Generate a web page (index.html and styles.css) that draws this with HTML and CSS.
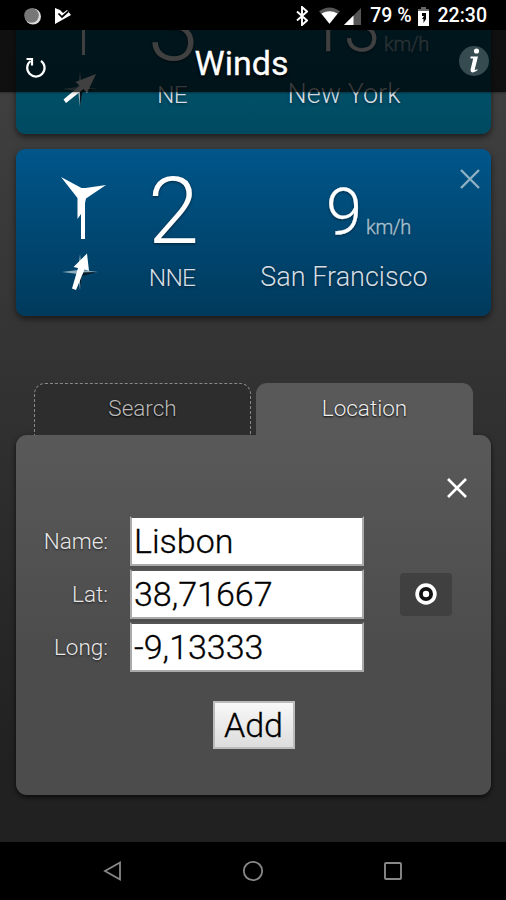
FILE: index.html
```html
<!DOCTYPE html>
<html lang="en">
<head>
<meta charset="utf-8">
<title>Winds</title>
<link rel="stylesheet" href="styles.css">
</head>
<body>
<div class="phone">
  <div class="status">
    <svg class="status-left" width="60" height="24" viewBox="0 0 60 24">
      <circle cx="14" cy="12.500" r="8" fill="#ddd"/><circle cx="12.500" cy="11.500" r="7.300" fill="#777"/>
      <path d="M36 4l5 2 3 3 4-3 4 5-16 9z" fill="#fff"/><path d="M39.500 9.500l3.500 3.500 6-5.500" fill="none" stroke="#000" stroke-width="1.700"/>
    </svg>
    <div class="status-right">
      <svg width="12" height="20" viewBox="0 0 12 20"><path d="M1 5.500l10 9-5 4.500V1l5 4.500-10 9" fill="none" stroke="#fff" stroke-width="1.900"/></svg>
      <svg class="wifi" width="21" height="18" viewBox="0 0 22 18"><path d="M0 4Q11-4 22 4L11 17z" fill="#555"/><path d="M2.500 6.500Q11 1.500 19.500 6.500L11 17z" fill="#fff"/></svg>
      <svg class="signal" width="17" height="17" viewBox="0 0 17 17"><path d="M17 0v17H0z" fill="#555"/><path d="M9.500 7.500V17H0z" fill="#fff"/></svg>
      <span class="percent">79 %</span>
      <svg class="battery" width="11" height="19" viewBox="0 0 11 19"><path d="M3 0h5v2h3v3H0V2h3z" fill="#666"/><path d="M0 4h11v15H0z" fill="#fff"/><path d="M4 6h4v6L5.500 16v-4H4l2-3H4z" fill="#000"/></svg>
      <span class="clock">22:30</span>
    </div>
  </div>

  <main class="app">
    <header class="header">
      <svg class="refresh" width="24" height="24" viewBox="0 0 24 24"><path d="M6.500 6A8.700 8.700 0 1 0 17 5.800" fill="none" stroke="#fff" stroke-width="2.200"/><path d="M2.500 4h5.500v6.500" fill="none" stroke="#fff" stroke-width="2.200"/></svg>
      <h1>Winds</h1>
      <svg class="info" width="30" height="30" viewBox="0 0 30 30"><circle cx="15" cy="15" r="15" fill="#354b50"/><circle cx="17.500" cy="5" r="2.600" fill="#fff"/><path d="M11.500 10.500h7.500l-3.300 13q0 1.200 2.800-.5l-.3 1.500q-6.700 4-6.700-.5l2.700-11.500h-2.700z" fill="#fff"/></svg>
    </header>

    <section class="card card-teal">
      <div class="icons">
        <svg class="turbine" width="46" height="64" viewBox="0 0 46 64"><path d="M0 0l21.500 11L45 8 25 21l-1 4v36h-3V35l-4-1V21z" fill="#fff"/></svg>
        <svg class="compass" width="38" height="38" viewBox="0 0 38 38"><path d="M19 1l2 16L37 19l-16 2L19 37l-2-16L1 19l16-2z" fill="#8da6af"/><path d="M19 19v18l2.500-15.500L35 19z" fill="#06161c"/><path d="M2.500 29.500L19 15.500l-4.500-3.500L35 4l-9 19-3.500-4L5 33z" fill="#fff"/></svg>
      </div>
      <div class="force">3</div>
      <div class="speed">13<span class="unit">km/h</span></div>
      <div class="direction">NE</div>
      <div class="place">New York</div>
    </section>

    <section class="card card-blue">
      <div class="icons">
        <svg class="turbine" width="46" height="64" viewBox="0 0 46 64"><path d="M0 0l20.500 11h4L45 8 25 21.500 24 26v36h-4V37l-3.500 5V21z" fill="#fff"/></svg>
        <svg class="compass" width="38" height="38" viewBox="0 0 38 38"><path d="M19 1l2 16L37 19l-16 2L19 37l-2-16L1 19l16-2z" fill="#90adbc"/><path d="M19 19.500L36 19l-15 4-2 13z" fill="#061a28"/><path d="M11 35.500L17 15l-4.500-1L26 .5 28 18l-4.500-1.500L15 37z" fill="#fff"/></svg>
      </div>
      <div class="force">2</div>
      <div class="speed">9<span class="unit">km/h</span></div>
      <div class="direction">NNE</div>
      <div class="place">San Francisco</div>
      <svg class="remove" width="20" height="20" viewBox="0 0 20 20"><path d="M1 1l18 18M19 1L1 19" stroke="#8fb0c3" stroke-width="2.400"/></svg>
    </section>

    <div class="tabs">
      <div class="tab">Search</div>
      <div class="tab active">Location</div>
    </div>
    <section class="panel">
      <svg class="close" width="20" height="20" viewBox="0 0 20 20"><path d="M1 1l18 18M19 1L1 19" stroke="#fff" stroke-width="2.600"/></svg>
      <div class="form">
        <label for="name">Name:</label><input id="name" value="Lisbon">
        <label for="lat">Lat:</label><input id="lat" value="38,71667">
        <button class="locate" aria-label="Locate"><svg width="24" height="24" viewBox="0 0 24 24"><circle cx="12" cy="12" r="10.700" fill="#fff"/><circle cx="12" cy="12" r="7" fill="#111"/><circle cx="12" cy="12" r="3.200" fill="#fff"/></svg></button>
        <label for="long">Long:</label><input id="long" value="-9,13333">
      </div>
      <button class="add">Add</button>
    </section>
  </main>

  <nav class="nav">
    <svg width="20" height="22" viewBox="0 0 20 22"><path d="M17 2.500v17L2 11z" fill="none" stroke="#888" stroke-width="1.800"/></svg>
    <svg width="22" height="22" viewBox="0 0 22 22"><circle cx="11" cy="11" r="9.200" fill="none" stroke="#888" stroke-width="1.800"/></svg>
    <svg width="20" height="22" viewBox="0 0 20 22"><rect x="2" y="3" width="16" height="16" rx="1" fill="none" stroke="#888" stroke-width="1.900"/></svg>
  </nav>
</div>
</body>
</html>
```
FILE: styles.css
```css
* { box-sizing: border-box; }
body { margin: 0; background: #000; font-family: Roboto, "Liberation Sans", sans-serif; font-weight: 300; }
svg { display: block; flex: none; }
.phone { display: flex; flex-direction: column; width: 506px; height: 900px; overflow: hidden; }

.status { display: flex; justify-content: space-between; align-items: center; height: 30px; padding: 0 19px; background: #000; color: #fff; font-size: 19.500px; font-weight: 500; line-height: 26px; }
.status-left { margin-top: 1px; }
.status-right { display: flex; align-items: center; white-space: nowrap; }
.status-right > * { margin-top: 2px; }
.wifi { margin-left: 11px; }
.signal { margin-left: 4px; }
.percent { margin-left: 9px; }
.battery { margin-left: 6px; }
.clock { margin-left: 9px; }

.app { position: relative; flex: 1; overflow: hidden; padding: 0 15px 0 16px; background: linear-gradient(#424242, #212121 90%); }
.header { position: absolute; z-index: 2; top: 0; left: 0; display: flex; align-items: center; width: 506px; height: 62px; padding: 0 17px 0 24px; background: rgba(0, 0, 0, .75); box-shadow: 0 1px 2px rgba(0, 0, 0, .35); color: #fff; }
.refresh { margin-top: 11px; }
.header h1 { flex: 1; margin: 4px 0 0 -24px; font-size: 34px; font-weight: 400; text-align: center; text-shadow: 0 2px 3px #000; -webkit-text-stroke: .3px #fff; }

.card { position: relative; display: grid; grid-template-columns: 52px 88px 200px; grid-template-rows: 88px 40px; column-gap: 24px; width: 475px; height: 167px; padding: 20px 0 0 40px; border-radius: 9px; box-shadow: 0 3px 6px rgba(0, 0, 0, .55); color: #fff; text-align: center; text-shadow: 0 1px 3px rgba(0, 0, 0, .5); }
.card-teal { margin-top: -63px; padding-top: 19px; background: linear-gradient(#006080, #004a60); }
.card-blue { margin-top: 15px; background: linear-gradient(#00568a, #003a5c); }
.icons { grid-row: 1 / 3; display: flex; flex-direction: column; align-items: center; padding-top: 8px; }
.turbine { margin-left: 3px; }
.compass { margin: 12px 4px 0 0; }
.force { margin: 0 4px 0 -4px; font-size: 92px; letter-spacing: -3px; line-height: 86px; }
.speed { font-size: 65px; line-height: 87px; white-space: nowrap; -webkit-text-stroke: .3px #fff; }
.unit { display: inline-block; width: 0; text-indent: 4px; font-size: 20px; letter-spacing: -.4px; line-height: 1; opacity: .65; }
.direction { margin: 0 4px 0 -4px; font-size: 24.500px; letter-spacing: -.7px; line-height: 42px; color: #d5dde4; }
.place { font-size: 27px; line-height: 41px; color: #d5dde4; white-space: nowrap; }
.remove { position: absolute; top: 20px; right: 11px; }

.tabs { display: flex; gap: 5px; margin: 67px 18px 0; }
.tab { flex: 1; height: 52px; border: 1.500px dashed #888; border-bottom: 0; border-radius: 11px 11px 0 0; color: #bbb; background: #2d2d2d; font-size: 22.500px; line-height: 48px; text-align: center; text-shadow: 0 1px 2px #000; }
.tab.active { border: 1px solid #595959; border-bottom: 0; color: #eee; background: #595959; }
.panel { display: flex; flex-direction: column; width: 475px; height: 360px; padding-top: 43px; border-radius: 11px; background: linear-gradient(#595959, #4c4c4c 60%); box-shadow: 0 2px 5px rgba(0, 0, 0, .7); }
.close { align-self: flex-end; margin-right: 24px; }
.form { display: grid; grid-template-columns: 92px 234px 52px; grid-auto-rows: 50px; gap: 3px 22px; margin-top: 18px; align-items: center; }
.form label { grid-column: 1; color: #e8e8e8; font-size: 22.500px; line-height: 50px; text-align: right; text-shadow: 0 1px 2px #222; }
.form input { grid-column: 2; width: 234px; height: 50px; margin: 0; padding: 0 2px; border: 2px solid #aaa; border-top-color: #555; border-radius: 0; background: #fff; color: #000; font: 300 34px/46px Roboto, sans-serif; -webkit-text-stroke: .3px #000; }
.locate { grid-column: 3; display: flex; align-items: center; justify-content: center; width: 52px; height: 43px; margin-left: 14px; padding: 0; border: 0; border-radius: 4px; background: #404040; }
.add { align-self: center; width: 82px; height: 48px; margin: 29px 0 0; padding: 0; border: 2px solid #bbb; border-radius: 0; background: linear-gradient(#f8f8f8, #ddd); color: #000; font: 300 34px/44px Roboto, sans-serif; -webkit-text-stroke: .3px #000; }

.nav { display: flex; justify-content: space-between; align-items: center; height: 58px; padding: 0 103px; background: #000; }
```
